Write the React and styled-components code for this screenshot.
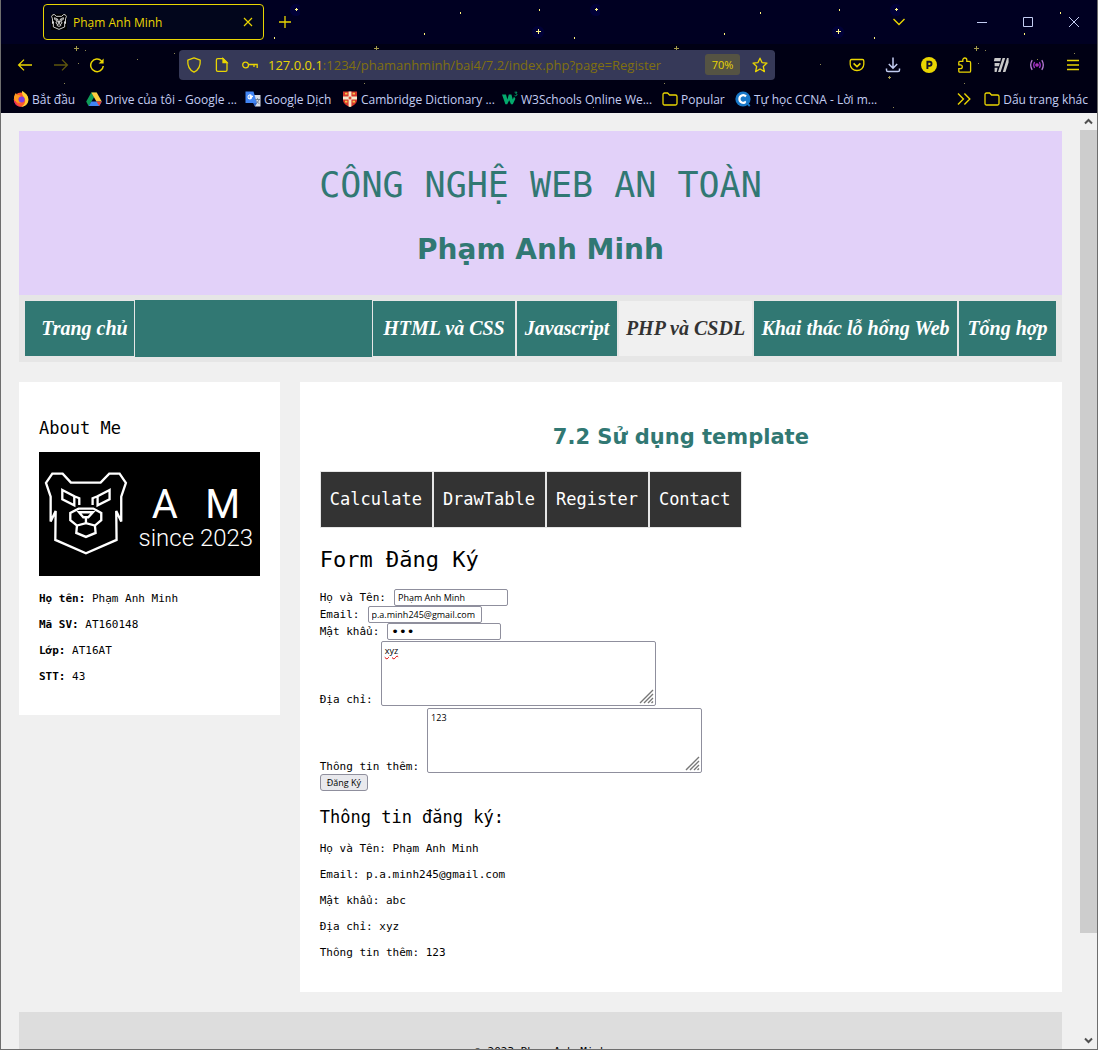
import React from "react";
import styled, { createGlobalStyle, css } from "styled-components";

const YELLOW = "#e9d502";
const TEAL = "#317873";
const UI = `"Open Sans", "Noto Sans", sans-serif`;
const MONO = `"DejaVu Sans Mono", "Liberation Mono", monospace`;
const WIDE = `"DejaVu Sans", sans-serif`;
const SCRIPT = `"Liberation Serif", serif`;

const GlobalStyle = createGlobalStyle`
  *, *::before, *::after { box-sizing: border-box; }
  body { margin: 0; background: #f0f0f0; }
  button, input, textarea { font: inherit; margin: 0; }
  svg { display: block; flex: none; }
`;

const Window = styled.div`
  display: flex;
  flex-direction: column;
  height: 100vh;
  border: solid #6e6e6e;
  border-width: 0 1px 1px;
  overflow: hidden;
`;

/* ---------- browser chrome ---------- */

const Chrome = styled.header`
  position: relative;
  flex: none;
  background: #000022;
  color: ${YELLOW};
  font-family: ${UI};
  font-size: 12px;
`;

const Sky = styled.svg`
  position: absolute;
  inset: 0;
  width: 100%;
  height: 100%;
`;

const TabBar = styled.div`
  display: flex;
  align-items: center;
  height: 44px;
  padding-left: 42px;
`;

const Tab = styled.div`
  position: relative;
  display: flex;
  align-items: center;
  gap: 6px;
  width: 221px;
  height: 36px;
  padding: 0 3px 0 7px;
  border: 1px solid ${YELLOW};
  border-radius: 4px;
  background: #02061c;
`;

const TabTitle = styled.span`
  flex: 1;
`;

const IconButton = styled.button`
  position: relative;
  display: flex;
  align-items: center;
  justify-content: center;
  flex: none;
  width: ${(p) => p.$w || 36}px;
  height: 30px;
  padding: 0;
  border: 0;
  background: none;
  color: ${(p) => p.$color || YELLOW};
  opacity: ${(p) => (p.$dim ? 0.4 : 1)};
`;

const Spacer = styled.div`
  flex: ${(p) => (p.$w ? `0 1 ${p.$w}px` : "1")};
`;

const Toolbar = styled.div`
  position: relative;
  display: flex;
  align-items: center;
  height: 41px;
  padding: 0 6px;
`;

const UrlBar = styled.div`
  display: flex;
  align-items: center;
  flex: 1;
  min-width: 0;
  height: 30px;
  padding-left: 1px;
  border-radius: 4px;
  background: #363958;
`;

const UrlText = styled.div`
  flex: 1;
  overflow: hidden;
  white-space: nowrap;
  font-size: 13px;
  color: #80700f;

  b {
    font-weight: 400;
    color: ${YELLOW};
  }
`;

const Zoom = styled.button`
  width: 35px;
  height: 21px;
  padding: 0;
  border: 0;
  border-radius: 3px;
  background: #555343;
  color: ${YELLOW};
  font-size: 11px;
`;

const Bookmarks = styled.nav`
  position: relative;
  display: flex;
  align-items: center;
  height: 28px;
  padding: 0 9px 0 12px;
`;

const Bookmark = styled.a`
  display: flex;
  align-items: center;
  gap: 3px;
  flex: none;
  width: ${(p) => (p.$w ? `${p.$w}px` : "auto")};
  white-space: nowrap;
  text-decoration: none;
  color: #c3cdf2;
`;

/* ---------- viewport and scroll bar ---------- */

const Viewport = styled.div`
  display: flex;
  flex: 1;
  min-height: 0;
  background: #f0f0f0;
`;

const Page = styled.div`
  flex: 1;
  min-width: 0;
  padding: 18px;
  overflow: hidden;
  font-family: ${MONO};
  font-size: 11px;
  line-height: 15px;
  color: #000;
`;

const ScrollBar = styled.div`
  display: flex;
  flex-direction: column;
  width: 17px;
  background: #f0f0f0;
  color: #505050;
`;

const ScrollArrow = styled.div`
  display: flex;
  align-items: center;
  justify-content: center;
  height: 17px;
`;

const ScrollTrack = styled.div`
  flex: 1;
`;

const ScrollThumb = styled.div`
  height: 89%;
  background: #cdcdcd;
`;

/* ---------- site ---------- */

const Banner = styled.header`
  padding: 29px 20px 26px;
  background: #e2d1f9;
  color: ${TEAL};
  text-align: center;
`;

const SiteTitle = styled.h1`
  margin: 0 0 20px;
  font-size: 35px;
  line-height: 50px;
  font-weight: 400;
`;

const SiteOwner = styled.h2`
  margin: 0;
  font-family: ${WIDE};
  font-size: 28px;
  line-height: 39px;
`;

const MainNav = styled.nav`
  display: grid;
  grid-template-columns: 111px 1fr 144px 102px 135px 205px 99px;
  padding: 5px;
  background: #e6e6e6;
`;

const navBox = css`
  display: flex;
  align-items: center;
  justify-content: center;
  height: 57px;
  white-space: nowrap;
  text-decoration: none;
`;

const NavLink = styled.a`
  ${navBox}
  border: 1px solid #e6e6e6;
  background: ${(p) => (p.$active ? "#f0f0f0" : TEAL)};
  color: ${(p) => (p.$active ? "#333" : "#fff")};
  font-family: ${SCRIPT};
  font-size: 20px;
  font-style: italic;
  font-weight: 700;
  padding-left: ${(p) => (p.$inset ? 10 : 0)}px;
`;

const NavFill = styled.div`
  height: 57px;
  background: ${TEAL};
`;

const Columns = styled.div`
  display: grid;
  grid-template-columns: 25% 1fr;
  align-items: start;
  gap: 20px;
  margin: 20px 0;
`;

const Side = styled.aside`
  padding: 34px 20px 31px;
  background: #fff;
`;

const Main = styled.main`
  padding: 43px 20px 32px;
  background: #fff;
`;

const Logo = styled.svg`
  width: 100%;
  margin: 12px 0 15px;
  background: #000;
`;

const Heading = styled.h3`
  margin: 0;
  font-size: 17px;
  line-height: 24px;
  font-weight: 400;
`;

const Line = styled.p`
  margin: 0;

  & + & {
    margin-top: 11px;
  }
`;

const Topic = styled.h2`
  margin: 0 0 22px;
  font-family: ${WIDE};
  font-size: 21px;
  line-height: 24px;
  text-align: center;
  color: ${TEAL};
`;

const SubNav = styled.nav`
  display: flex;
`;

const SubLink = styled.a`
  ${navBox}
  padding: 0 10px 0 9px;
  border: 1px solid #e6e6e6;
  background: #333;
  color: #fff;
  font-size: 17px;
`;

const FormTitle = styled.h2`
  margin: 17px 0 14px;
  font-size: 22px;
  line-height: 30px;
  font-weight: 400;
`;

const Form = styled.form`
  margin-bottom: 14px;
`;

const Field = styled.div`
  display: flex;
  align-items: ${(p) => (p.$tall ? "flex-end" : "center")};
  gap: 8px;
`;

const control = css`
  border: 1px solid #8f8f9d;
  border-radius: 2px;
  background: #fff;
  color: #000;
  font-family: ${UI};
  outline: 0;
`;

const Input = styled.input`
  ${control}
  width: 114px;
  height: 17px;
  padding: 0 3px;
  font-size: 9px;

  &[type="password"] {
    font-family: ${WIDE};
    font-size: 13px;
  }
`;

const AreaWrap = styled.div`
  position: relative;
  display: flex;
  margin: 1px 0;
`;

const Area = styled.textarea`
  ${control}
  width: 275px;
  height: 65px;
  padding: 3px;
  font-size: 9px;
  line-height: 12px;
  resize: none;
  text-decoration: ${(p) => (p.$misspelt ? "underline wavy #e00000 1px" : "none")};
`;

const Grip = styled.svg`
  position: absolute;
  right: 2px;
  bottom: 2px;
`;

const Submit = styled.button`
  ${control}
  display: block;
  height: 17px;
  padding: 0 6px;
  border-radius: 3px;
  background: #e9e9ed;
  font-size: 9px;
  line-height: 15px;
`;

const Result = styled.section`
  ${Heading} {
    margin-bottom: 12px;
  }
`;

const Footer = styled.footer`
  padding: 32px 20px;
  background: #ddd;
  text-align: center;
`;

/* ---------- drawings ---------- */

const BEAR = [
  "M213 248 188 221H157L138 249 152 290V365L167 333 166 420 258 460 350 420 349 333 364 365V290L378 249 359 221H328L302 248Z",
  "M187 270 223 289V316L187 298Z M223 289 238 295V315",
  "M329 270 293 289V316L329 298Z M293 289 278 295V315",
  "M236 326H280L304 339V361L285 377 258 370 231 377 211 361V339Z",
  "M237 337H279L265 352H250Z M258 352V370",
  "M231 377 229 399 258 411 287 399 285 377",
];

function Bear({ weight = 7 }) {
  return (
    <g fill="none" stroke="#fff" strokeWidth={weight}>
      {BEAR.map((d) => <path key={d} d={d} />)}
    </g>
  );
}

function Icon({ size = 16, children, box = 16, ...rest }) {
  return (
    <svg width={size} height={size} viewBox={`0 0 ${box} ${box}`} fill="none" stroke="currentColor" strokeWidth="1.3" aria-hidden="true" {...rest}>
      {children}
    </svg>
  );
}

const plus = (x, y, r) => `M${x - r} ${y + 0.5}h${2 * r + 1}M${x + 0.5} ${y - r}v${2 * r + 1}`;

function Stars() {
  const dots = [[274, 37], [124, 33], [239, 9], [160, 12], [85, 50], [78, 63], [64, 83], [293, 107], [174, 53], [220, 64], [137, 59], [76, 46]];
  return (
    <Sky aria-hidden="true">
      <defs>
        <pattern id="stars" width="300" height="113" patternUnits="userSpaceOnUse" x="-1">
          <circle cx="296" cy="10" r="6" fill="#000038" />
          <circle cx="238" cy="32" r="6" fill="#000038" />
          {dots.map(([x, y]) => (
            <rect key={`${x}-${y}`} x={x} y={y} width="1" height={y < 40 ? 2 : 1} fill={y < 40 ? "#fff27a" : "#8d8752"} />
          ))}
          <path d={plus(296, 9, 1)} stroke="#fff68a" />
          <path d={plus(238, 31, 2)} stroke="#fff68a" />
          <path d={plus(76, 48, 2)} stroke="#a39a4c" />
          <path d={plus(289, 77, 1)} stroke="#a39a4c" />
        </pattern>
      </defs>
      <rect y="44" width="100%" height="69" fill="#000014" />
      <rect width="100%" height="100%" fill="url(#stars)" />
    </Sky>
  );
}

const Folder = () => (
  <Icon color={YELLOW}>
    <path d="M1 3.6C1 2.7 1.6 2 2.5 2H5.6L7.6 4H13.5C14.4 4 15 4.6 15 5.5V12.5C15 13.4 14.4 14 13.5 14H2.5C1.6 14 1 13.4 1 12.5Z" />
  </Icon>
);

const Firefox = () => (
  <Icon stroke="none">
    <circle cx="8" cy="8.6" r="7.2" fill="#ff5a2c" />
    <path d="M9 0C13 2 15.6 5 15.4 9.2C15 13 12 15.8 8 15.8C12 14 13 10 11.5 7C10 5 8.6 3 9 0Z" fill="#ffcf33" />
    <path d="M1 7C1 4.6 2 3 3 2L4 4.2C6 3.6 7 4.4 8 5.4L5.4 7C5 9 6 10.6 9 10.8C6 13 2 12 1 7Z" fill="#ff9a1f" />
    <circle cx="8.6" cy="8.4" r="3" fill="#7a3fe0" />
    <path d="M1 10C2 14 5 16 9 15.6C5 15 3 13 2.4 10Z" fill="#e8246a" />
  </Icon>
);

const Drive = () => (
  <Icon stroke="none">
    <path d="M5.3 1.5H10.7L8 6.2Z" fill="#188038" />
    <path d="M5.3 1.5 8 6.2 2.7 15.2 .2 10.5Z" fill="#0f9d58" />
    <path d="M10.7 1.5 15.8 10.5H10.4L5.3 1.5Z" fill="#ffcd40" />
    <path d="M5.4 10.5H15.8L13.2 15H2.7Z" fill="#4285f4" />
    <path d="M10.4 10.5H15.8L13.2 15Z" fill="#ea4335" />
  </Icon>
);

const Translate = () => (
  <Icon stroke="none">
    <path d="M7 4H15.5V15.5H10Z" fill="#d9dce3" />
    <path d="M.5 .5H8.5L12 12H.5Z" fill="#4285f4" />
    <path d="M8 5.4H5.2V6.6H6.6C6.3 8.4 3 8.4 3 6C3 3.8 5.4 3.4 6.4 4.6" stroke="#fff" strokeWidth="1.1" />
    <path d="M10 8.5H15M12.5 7.2V8.5M14 8.5C13.5 10.5 12 12 10.8 12.6M11.4 9.6C12 11 13.4 12.2 14.4 12.6" stroke="#6d7a8c" strokeWidth=".9" />
    <path d="M8 12H12L10 15.5Z" fill="#3064c8" />
  </Icon>
);

const Cambridge = () => (
  <Icon stroke="none">
    <path d="M1 .5H15V9C15 12.6 11 15 8 16C5 15 1 12.6 1 9Z" fill="#d8372a" />
    <path d="M6.6 .5H9.4V15.4L8 16 6.6 15.4ZM1 5.6H15V8.4H1Z" fill="#f6e9c9" />
    <path d="M3 2.6H5.4M10.6 2.6H13M3 10.6H5.4M10.6 10.6H13" stroke="#f3c64a" strokeWidth="1.6" />
    <path d="M8 5.4V8.6M6.6 7H9.4" stroke="#d8372a" />
  </Icon>
);

const W3 = () => (
  <Icon stroke="none">
    <path d="M0 3.4H4L5.4 8.6 6.8 3.4H9.4L10.8 8.6 12 5.6 13.4 7.8 10.8 13.2H9L7.2 9.2 5.2 13.2H3.4Z" fill="#04aa6d" />
    <path d="M12.6 1.2H15L13.8 2.6C15.4 2.6 15.4 4.8 13.6 4.8L12.6 4.4" stroke="#04aa6d" strokeWidth=".9" />
  </Icon>
);

const Ccna = () => (
  <Icon stroke="none">
    <circle cx="8" cy="8" r="7.6" fill="#1878c8" />
    <path d="M11 5.4C8.4 2.8 4.4 4.6 4.4 8C4.4 11.4 8.4 13.2 11 10.6" stroke="#fff" strokeWidth="2.2" />
    <path d="M11 11.6 14.8 15" stroke="#1878c8" strokeWidth="2" />
  </Icon>
);

const BOOKMARKS = [
  { text: "Bắt đầu", icon: Firefox, w: 73 },
  { text: "Drive của tôi - Google ...", icon: Drive, w: 159 },
  { text: "Google Dịch", icon: Translate, w: 97 },
  { text: "Cambridge Dictionary ...", icon: Cambridge, w: 160 },
  { text: "W3Schools Online We...", icon: W3, w: 160 },
  { text: "Popular", icon: Folder, w: 73 },
  { text: "Tự học CCNA - Lời m...", icon: Ccna, w: 150 },
];

const MENU = [
  { text: "Trang chủ", inset: true },
  null,
  { text: "HTML và CSS" },
  { text: "Javascript" },
  { text: "PHP và CSDL", active: true },
  { text: "Khai thác lỗ hổng Web" },
  { text: "Tổng hợp" },
];

function BrowserChrome() {
  return (
    <Chrome>
      <Stars />
      <TabBar>
        <Tab>
          <svg width="16" height="16" viewBox="128 210 260 260" aria-hidden="true">
            <rect x="128" y="210" width="260" height="260" fill="#000" />
            <Bear weight={13} />
          </svg>
          <TabTitle>Phạm Anh Minh</TabTitle>
          <IconButton $w={24} aria-label="Close tab">
            <Icon size={10} box={10} strokeWidth="1.2"><path d="M1 1 9 9M9 1 1 9" /></Icon>
          </IconButton>
        </Tab>
        <Spacer $w={3} />
        <IconButton aria-label="New tab">
          <Icon size={14} box={14}><path d="M7 1V13M1 7H13" /></Icon>
        </IconButton>
        <Spacer />
        <IconButton aria-label="List all tabs">
          <Icon strokeWidth="1.4"><path d="M2.5 5 8 10.5 13.5 5" /></Icon>
        </IconButton>
        <Spacer $w={42} />
        <IconButton $w={46} $color="#c3cdf2" aria-label="Minimize">
          <Icon size={10} box={10} strokeWidth="1"><path d="M0 5.5H10" /></Icon>
        </IconButton>
        <IconButton $w={46} $color="#c3cdf2" aria-label="Maximize">
          <Icon size={10} box={10} strokeWidth="1"><path d="M.5 .5H9.5V9.5H.5Z" /></Icon>
        </IconButton>
        <IconButton $w={46} $color="#c3cdf2" aria-label="Close">
          <Icon size={10} box={10} strokeWidth="1"><path d="M0 0 10 10M10 0 0 10" /></Icon>
        </IconButton>
      </TabBar>

      <Toolbar>
        <IconButton aria-label="Back"><Icon><path d="M15 8H1.6M7 2.6 1.6 8 7 13.4" /></Icon></IconButton>
        <IconButton $dim aria-label="Forward"><Icon><path d="M1 8H14.4M9 2.6 14.4 8 9 13.4" /></Icon></IconButton>
        <IconButton aria-label="Reload">
          <Icon strokeWidth="1.5">
            <path d="M12.6 4A6.3 6.3 0 1 0 14.3 9" />
            <path d="M14.6 1.4V6.4H9.6Z" fill="currentColor" stroke="none" />
          </Icon>
        </IconButton>
        <Spacer $w={64} />
        <UrlBar>
          <IconButton $w={28} aria-label="Tracking protection">
            <Icon><path d="M8 .9 14.2 3.2C14.6 8.6 12.4 13 8 15.2C3.6 13 1.4 8.6 1.8 3.2Z" strokeLinejoin="round" /></Icon>
          </IconButton>
          <IconButton $w={28} aria-label="Page information">
            <Icon>
              <path d="M3.8 1.6H9L13 5.6V13C13 13.9 12.4 14.4 11.6 14.4H3.8C3 14.4 2.4 13.9 2.4 13V3C2.4 2.2 3 1.6 3.8 1.6Z" />
              <path d="M9 1.6V5.6H13Z" fill="currentColor" />
            </Icon>
          </IconButton>
          <IconButton $w={28} aria-label="Saved password">
            <Icon><circle cx="3.6" cy="8" r="2.9" /><path d="M6.5 7.5H15.2V11M12 7.5V10" /></Icon>
          </IconButton>
          <Spacer $w={4} />
          <UrlText><b>127.0.0.1</b>:1234/phamanhminh/bai4/7.2/index.php?page=Register</UrlText>
          <Zoom>70%</Zoom>
          <Spacer $w={5} />
          <IconButton $w={30} aria-label="Bookmark this page">
            <Icon><path d="M8 1.2 10 5.6 15 6.1 11.3 9.5 12.4 14.6 8 12 3.6 14.6 4.7 9.5 1 6.1 6 5.6Z" strokeLinejoin="round" /></Icon>
          </IconButton>
        </UrlBar>
        <Spacer $w={64} />
        <IconButton aria-label="Pocket">
          <Icon>
            <path d="M2.6 2.5H13.4C14.3 2.5 14.8 3.1 14.8 4V7.2A6.8 6.3 0 0 1 1.2 7.2V4C1.2 3.1 1.7 2.5 2.6 2.5Z" />
            <path d="M4.6 6.4 8 9.6 11.4 6.4" strokeWidth="1.6" />
          </Icon>
        </IconButton>
        <IconButton $color="#c3cdf2" aria-label="Downloads">
          <Icon><path d="M8 .5V11M3.8 7 8 11.2 12.2 7M1.5 11.5V13C1.5 14.2 2 14.6 3 14.6H13C14 14.6 14.5 14.2 14.5 13V11.5" strokeWidth="1.5" /></Icon>
        </IconButton>
        <IconButton aria-label="Extension P">
          <Icon stroke="none">
            <circle cx="8" cy="8" r="8" fill="currentColor" />
            <path d="M6.4 12V4.8H8.6C11.2 4.8 11.2 8.9 8.6 8.9H6.4" stroke="#111128" strokeWidth="1.9" />
          </Icon>
        </IconButton>
        <IconButton aria-label="Extensions">
          <Icon><path d="M2.6 4.4H5.8V3A2 2 0 0 1 9.8 3V4.4H12.2C13.4 4.4 13.6 5 13.6 5.8V14C13.6 14.8 13.2 15.2 12.4 15.2H3C2 15.2 1.8 14.8 1.8 14V11.6H3.4A1.9 1.9 0 0 0 3.4 7.8H1.8V5.6C1.8 4.8 2 4.4 2.6 4.4Z" /></Icon>
        </IconButton>
        <IconButton $color="#c9c9c9" aria-label="Extension stripes">
          <Icon stroke="none" fill="currentColor">
            <path d="M1.6 1H8L7.2 4.2H.8ZM1.6 6H6.8L6 9.2H1.6ZM1.6 10.8H4.6L3.6 15H1.6ZM9.6 1H12.2L7.6 15H5ZM14 1H15.6V5.4L12.4 15H9.8Z" />
          </Icon>
        </IconButton>
        <IconButton $color="#b87cd6" aria-label="Extension broadcast">
          <Icon>
            <path d="M3.2 3.2Q.2 8 3.2 12.8M12.8 3.2Q15.8 8 12.8 12.8" />
            <path d="M5.6 5Q3.8 8 5.6 11M10.4 5Q12.2 8 10.4 11" stroke="#9a2fc8" />
            <circle cx="8" cy="8" r="1.1" stroke="#c03ad0" />
          </Icon>
        </IconButton>
        <IconButton aria-label="Menu">
          <Icon><path d="M2 3.5H14M2 8H14M2 12.5H14" /></Icon>
        </IconButton>
      </Toolbar>

      <Bookmarks>
        {BOOKMARKS.map(({ text, icon: Mark, w }) => (
          <Bookmark key={text} href="#" $w={w}><Mark />{text}</Bookmark>
        ))}
        <Spacer />
        <IconButton aria-label="More bookmarks">
          <Icon strokeWidth="1.4"><path d="M2 2.6 7.4 8 2 13.4M8.4 2.6 13.8 8 8.4 13.4" /></Icon>
        </IconButton>
        <Spacer $w={2} />
        <Bookmark href="#"><Folder />Dấu trang khác</Bookmark>
      </Bookmarks>
    </Chrome>
  );
}

function AreaField({ id, label, value, misspelt }) {
  return (
    <Field $tall>
      <label htmlFor={id}>{label}</label>
      <AreaWrap>
        <Area id={id} defaultValue={value} spellCheck={false} $misspelt={misspelt} />
        <Grip width="15" height="15" viewBox="0 0 15 15" stroke="#777" strokeWidth="1.4" aria-hidden="true">
          <path d="M1 14 14 1M5 14 14 5M9 14 14 9M12.5 14 14 12.5" />
        </Grip>
      </AreaWrap>
    </Field>
  );
}

function Site() {
  return (
    <Page>
      <Banner>
        <SiteTitle>CÔNG NGHỆ WEB AN TOÀN</SiteTitle>
        <SiteOwner>Phạm Anh Minh</SiteOwner>
      </Banner>
      <MainNav>
        {MENU.map((item) =>
          item ? (
            <NavLink key={item.text} href="#" $active={item.active} $inset={item.inset}>{item.text}</NavLink>
          ) : (
            <NavFill key="fill" />
          )
        )}
      </MainNav>
      <Columns>
        <Side>
          <Heading>About Me</Heading>
          <Logo viewBox="0 0 221 124" role="img" aria-label="AM since 2023">
            <g transform="scale(.3333) translate(-117 -156)"><Bear /></g>
            <g fill="#fff" textAnchor="middle" fontFamily="'Liberation Sans Narrow', Roboto, sans-serif">
              <text x="126" y="66" fontSize="40">A</text>
              <text x="184" y="66" fontSize="40">M</text>
              <text x="157" y="94" fontSize="24" fontWeight="300">since 2023</text>
            </g>
          </Logo>
          <Line><b>Họ tên:</b> Phạm Anh Minh</Line>
          <Line><b>Mã SV:</b> AT160148</Line>
          <Line><b>Lớp:</b> AT16AT</Line>
          <Line><b>STT:</b> 43</Line>
        </Side>
        <Main>
          <Topic>7.2 Sử dụng template</Topic>
          <SubNav>
            {["Calculate", "DrawTable", "Register", "Contact"].map((t) => (
              <SubLink key={t} href="#">{t}</SubLink>
            ))}
          </SubNav>
          <FormTitle>Form Đăng Ký</FormTitle>
          <Form onSubmit={(e) => e.preventDefault()}>
            <Field>
              <label htmlFor="name">Họ và Tên:</label>
              <Input id="name" defaultValue="Phạm Anh Minh" />
            </Field>
            <Field>
              <label htmlFor="email">Email:</label>
              <Input id="email" type="email" defaultValue="p.a.minh245@gmail.com" />
            </Field>
            <Field>
              <label htmlFor="password">Mật khẩu:</label>
              <Input id="password" type="password" defaultValue="abc" />
            </Field>
            <AreaField id="address" label="Địa chỉ:" value="xyz" misspelt />
            <AreaField id="more" label="Thông tin thêm:" value="123" />
            <Submit>Đăng Ký</Submit>
          </Form>
          <Result>
            <Heading>Thông tin đăng ký:</Heading>
            <Line>Họ và Tên: Phạm Anh Minh</Line>
            <Line>Email: p.a.minh245@gmail.com</Line>
            <Line>Mật khẩu: abc</Line>
            <Line>Địa chỉ: xyz</Line>
            <Line>Thông tin thêm: 123</Line>
          </Result>
        </Main>
      </Columns>
      <Footer>© 2023 Phạm Anh Minh</Footer>
    </Page>
  );
}

export default function App() {
  return (
    <Window>
      <GlobalStyle />
      <BrowserChrome />
      <Viewport>
        <Site />
        <ScrollBar aria-hidden="true">
          <ScrollArrow><Icon size={9} box={9} strokeWidth="2"><path d="M1 6.5 4.5 3 8 6.5" /></Icon></ScrollArrow>
          <ScrollTrack><ScrollThumb /></ScrollTrack>
          <ScrollArrow><Icon size={9} box={9} strokeWidth="2"><path d="M1 2.5 4.5 6 8 2.5" /></Icon></ScrollArrow>
        </ScrollBar>
      </Viewport>
    </Window>
  );
}
